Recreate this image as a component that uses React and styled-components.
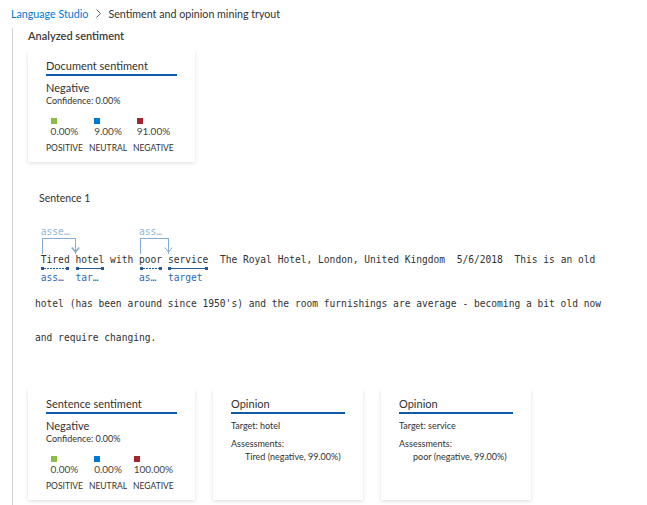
import styled, { createGlobalStyle } from 'styled-components';

const GlobalStyle = createGlobalStyle`
  body {
    margin: 0;
    background: #fff;
    font-family: Lato, "Liberation Sans", sans-serif;
    color: #323130;
  }
`;

const Page = styled.div`
  width: 647px;
  height: 505px;
  overflow: hidden;
`;

const Breadcrumb = styled.nav`
  display: flex;
  align-items: center;
  height: 26px;
  margin-bottom: 2px;
  padding-left: 11px;
  font-size: 10.7px;
`;

const Crumb = styled.span`
  color: ${(p) => (p.$link ? '#0078d4' : '#323130')};
`;

const Chevron = styled.svg`
  margin: 0 7px 0 8px;
`;

const Main = styled.main`
  margin-left: 12px;
  border-left: 1px solid #d2d0ce;
  padding-left: 15px;
  padding-bottom: 10px;
`;

const Heading = styled.h2`
  margin: 0;
  font-size: 11px;
  font-weight: 600;
  line-height: 16px;
  color: #3b3a39;
`;

const Card = styled.div`
  width: ${(p) => p.$width}px;
  box-sizing: border-box;
  padding: 8px 18px 8px;
  background: #fff;
  box-shadow: 0 1.6px 3.6px 0 rgba(0, 0, 0, 0.13), 0 0.3px 0.9px 0 rgba(0, 0, 0, 0.11);
  margin-top: ${(p) => p.$top || 0}px;
`;

const CardTitle = styled.div`
  font-size: 11px;
  line-height: 16px;
  border-bottom: 2px solid #0f5ca6;
`;

const Verdict = styled.div`
  margin-top: 5px;
  font-size: 11px;
  line-height: 14px;
`;

const Small = styled.div`
  font-size: 9px;
  line-height: ${(p) => p.$lh || 11}px;
  margin-top: ${(p) => p.$top || 0}px;
  padding-left: ${(p) => p.$indent || 0}px;
`;

const Scores = styled.div`
  display: flex;
  gap: 6px;
  margin-top: 12px;
`;

const Score = styled.div`
  display: flex;
  flex-direction: column;
  align-items: center;
`;

const Legend = styled.div`
  display: flex;
  flex-direction: column;
  align-items: flex-start;
`;

const Swatch = styled.span`
  width: 6px;
  height: 6px;
  background: ${(p) => p.$color};
`;

const Pct = styled.span`
  font-size: 10px;
  line-height: 14px;
  color: #484644;
`;

const ScoreName = styled.span`
  margin-top: 4px;
  font-size: 8.5px;
  line-height: 12px;
  text-transform: uppercase;
`;

const Sentence = styled.section`
  margin-top: 28px;
`;

const SentenceLabel = styled.div`
  margin-left: 11px;
  font-size: 10.5px;
  line-height: 16px;
`;

const TextBlock = styled.div`
  margin: 20px 0 0 7px;
  font-family: "DejaVu Sans Mono", "Liberation Mono", monospace;
  font-size: 9.6px;
  color: #323130;
`;

const TokenLine = styled.div`
  display: flex;
  height: 61px;
`;

const Token = styled.div`
  display: flex;
  flex-direction: column;
`;

const TokenTop = styled.div`
  position: relative;
  height: 28px;
`;

const TopLabel = styled.div`
  line-height: 12px;
  color: #8fb5dc;
  white-space: pre;
`;

const Bracket = styled.div`
  position: absolute;
  top: 12px;
  left: 1px;
  width: ${(p) => p.$span}ch;
  height: 16px;
  box-sizing: border-box;
  border: 1px solid #85acd5;
  border-bottom: none;
  svg {
    position: absolute;
    right: -5px;
    bottom: 1px;
  }
`;

const Word = styled.div`
  line-height: 12px;
  white-space: pre;
`;

const Marker = styled.div`
  position: relative;
  height: 3px;
  margin: 1px 0.5px 0;
  background: ${(p) =>
      p.$dashed
        ? 'repeating-linear-gradient(to right, #24599c 0 2px, transparent 2px 3px)'
        : 'linear-gradient(#24599c, #24599c)'}
    no-repeat center / 100% 1px;
  &::before,
  &::after {
    content: '';
    position: absolute;
    top: 0;
    width: 3px;
    height: 3px;
    background: #24599c;
  }
  &::before {
    left: 0;
  }
  &::after {
    right: 0;
  }
`;

const BottomLabel = styled.div`
  margin-top: 2px;
  line-height: 12px;
  color: #2a69b2;
  white-space: pre;
`;

const TextLine = styled.div`
  line-height: 34px;
  white-space: pre;
`;

const CardRow = styled.div`
  display: flex;
  gap: 18px;
  margin-top: 33px;
`;

const Arrow = ({ bold }) => (
  <svg width="9" height="6" viewBox="0 0 9 6">
    <path d="M0.8 0.5 L4.5 5 L8.2 0.5" fill="none" stroke="#85acd5" strokeWidth={bold ? 1.6 : 1} />
  </svg>
);

function Plain({ text }) {
  return (
    <Token>
      <TokenTop />
      <Word>{text}</Word>
    </Token>
  );
}

function Annotated({ word, top, bottom, dashed, span, bold }) {
  return (
    <Token>
      <TokenTop>
        {top && <TopLabel>{top}</TopLabel>}
        {span && (
          <Bracket $span={span}>
            <Arrow bold={bold} />
          </Bracket>
        )}
      </TokenTop>
      <Word>{word}</Word>
      <Marker $dashed={dashed} />
      <BottomLabel>{bottom}</BottomLabel>
    </Token>
  );
}

const scoreColors = { positive: '#8cbd45', neutral: '#0078d4', negative: '#a4262c' };

function SentimentCard({ title, scores, top }) {
  return (
    <Card $width={167} $top={top}>
      <CardTitle>{title}</CardTitle>
      <Verdict>Negative</Verdict>
      <Small>Confidence: 0.00%</Small>
      <Scores>
        {Object.keys(scoreColors).map((k) => (
          <Score key={k}>
            <Legend>
              <Swatch $color={scoreColors[k]} />
              <Pct>{scores[k]}</Pct>
            </Legend>
            <ScoreName>{k}</ScoreName>
          </Score>
        ))}
      </Scores>
    </Card>
  );
}

function OpinionCard({ target, assessment }) {
  return (
    <Card $width={150}>
      <CardTitle>Opinion</CardTitle>
      <Small $lh={12} $top={6}>Target: {target}</Small>
      <Small $lh={12} $top={6}>Assessments:</Small>
      <Small $lh={12} $top={1} $indent={14}>{assessment}</Small>
    </Card>
  );
}

export default function App() {
  return (
    <Page>
      <GlobalStyle />
      <Breadcrumb>
        <Crumb $link>Language Studio</Crumb>
        <Chevron width="5" height="9" viewBox="0 0 5 9">
          <path d="M0.5 0.5 L4.5 4.5 L0.5 8.5" fill="none" stroke="#605e5c" strokeWidth="1" />
        </Chevron>
        <Crumb>Sentiment and opinion mining tryout</Crumb>
      </Breadcrumb>
      <Main>
        <Heading>Analyzed sentiment</Heading>
        <SentimentCard
          top={6}
          title="Document sentiment"
          scores={{ positive: '0.00%', neutral: '9.00%', negative: '91.00%' }}
        />
        <Sentence>
          <SentenceLabel>Sentence 1</SentenceLabel>
          <TextBlock>
            <TokenLine>
              <Plain text=" " />
              <Annotated word="Tired" top="asse…" bottom="ass…" dashed span={6} bold />
              <Plain text=" " />
              <Annotated word="hotel" bottom="tar…" />
              <Plain text=" with " />
              <Annotated word="poor" top="ass…" bottom="as…" dashed span={5} />
              <Plain text=" " />
              <Annotated word="service" bottom="target" />
              <Plain text="  The Royal Hotel, London, United Kingdom  5/6/2018  This is an old" />
            </TokenLine>
            <TextLine>hotel (has been around since 1950's) and the room furnishings are average - becoming a bit old now</TextLine>
            <TextLine>and require changing.</TextLine>
          </TextBlock>
        </Sentence>
        <CardRow>
          <SentimentCard
            title="Sentence sentiment"
            scores={{ positive: '0.00%', neutral: '0.00%', negative: '100.00%' }}
          />
          <OpinionCard target="hotel" assessment="Tired (negative, 99.00%)" />
          <OpinionCard target="service" assessment="poor (negative, 99.00%)" />
        </CardRow>
      </Main>
    </Page>
  );
}
